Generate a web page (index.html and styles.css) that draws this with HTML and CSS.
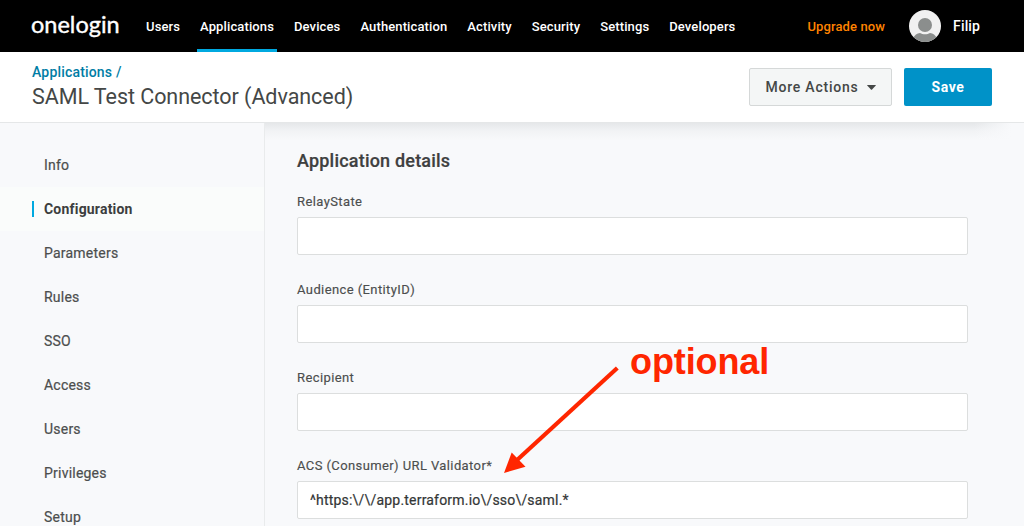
FILE: index.html
```html
<!DOCTYPE html>
<html lang="en">
<head>
<meta charset="utf-8">
<title>SAML Test Connector (Advanced)</title>
<link rel="stylesheet" href="styles.css">
</head>
<body>
<header class="topbar">
  <div class="logo">onelogin</div>
  <nav class="nav">
    <a>Users</a>
    <a class="current">Applications</a>
    <a>Devices</a>
    <a>Authentication</a>
    <a>Activity</a>
    <a>Security</a>
    <a>Settings</a>
    <a>Developers</a>
  </nav>
  <div class="account">
    <a class="upgrade">Upgrade now</a>
    <svg class="avatar" width="32" height="32" viewBox="0 0 32 32">
      <defs><clipPath id="disc"><circle cx="16" cy="16" r="16"/></clipPath></defs>
      <g clip-path="url(#disc)">
        <rect width="32" height="32" fill="#f1f1f1"/>
        <circle cx="16" cy="15" r="7" fill="#8b8e8d"/>
        <path d="M4 28.5C5.500 25 8 23.200 11 23c1.500.9 3 1.300 5 1.300s3.500-.4 5-1.300c3 .2 5.500 2 7 5.500V32H4z" fill="#8b8e8d"/>
      </g>
    </svg>
    <span class="user">Filip</span>
  </div>
</header>
<section class="titlebar">
  <div class="heading">
    <a class="crumb">Applications /</a>
    <h1>SAML Test Connector (Advanced)</h1>
  </div>
  <div class="actions">
    <button class="btn more">More Actions
      <svg width="9" height="5" viewBox="0 0 8 5" preserveAspectRatio="none"><path d="M.5 0h7q.7 0 .3.600L4.500 4.600q-.5.500-1 0L.2.600Q-.2 0 .5 0z" fill="#444746"/></svg>
    </button>
    <button class="btn save">Save</button>
  </div>
</section>
<div class="layout">
  <aside class="side">
    <a>Info</a>
    <a class="active"><span>Configuration</span></a>
    <a>Parameters</a>
    <a>Rules</a>
    <a>SSO</a>
    <a>Access</a>
    <a>Users</a>
    <a>Privileges</a>
    <a>Setup</a>
  </aside>
  <main class="main">
    <h2>Application details</h2>
    <label class="field"><span>RelayState</span><input type="text"></label>
    <label class="field"><span>Audience (EntityID)</span><input type="text"></label>
    <label class="field"><span>Recipient</span><input type="text"></label>
    <label class="field"><span>ACS (Consumer) URL Validator*</span><input type="text" value="^https:\/\/app.terraform.io\/sso\/saml.*"></label>
  </main>
</div>
<div class="note">optional</div>
<svg class="arrow" width="120" height="112" viewBox="500 364 120 112">
  <path d="M617.300 368L516 461" stroke="#ff2600" stroke-width="4.200" fill="none"/>
  <path d="M504 473L511.700 452.500L525.500 466.700z" fill="#ff2600"/>
</svg>
</body>
</html>
```
FILE: styles.css
```css
* { box-sizing: border-box; }
body {
  margin: 0;
  height: 526px;
  overflow: hidden;
  position: relative;
  background: #f8f9fb;
  color: #444746;
  font-family: Roboto, "Liberation Sans", sans-serif;
}
.topbar {
  height: 52px;
  background: #000;
  color: #fff;
  display: flex;
  align-items: center;
  padding: 0 44px 0 31px;
  font-size: 13px;
  font-weight: 500;
  letter-spacing: 0.12px;
}
.logo {
  width: 115px;
  font: 400 23.5px/30px Lato, sans-serif;
  letter-spacing: 0;
  padding-bottom: 5px;
  -webkit-text-stroke: 0.4px #fff;
}
.nav { display: flex; gap: 14px; height: 52px; margin-left: -3px; }
.nav a { padding: 0 3px; line-height: 53px; }
.nav .current { box-shadow: inset 0 -3px #00a9e0; }
.account { display: flex; align-items: center; margin-left: auto; }
.upgrade { color: #ff8300; margin-right: 24px; }
.avatar { margin-right: 12px; }
.user { font-size: 14px; }
.titlebar {
  height: 71px;
  background: #fff;
  border-bottom: 1px solid #e5e7e8;
  display: flex;
  justify-content: space-between;
  padding: 11px 32px 0;
}
.crumb { display: block; color: #007da5; font-size: 14px; font-weight: 500; line-height: 18px; letter-spacing: 0.18px; }
h1 { margin: 3px 0 0; font-size: 21.5px; font-weight: 400; line-height: 26px; letter-spacing: -0.05px; }
.actions { display: flex; gap: 12px; padding-top: 5px; }
.btn {
  height: 38px;
  border-radius: 2px;
  font: 500 14px/20px Roboto, sans-serif;
  padding: 0;
}
.more {
  width: 143px;
  display: flex;
  align-items: center;
  justify-content: center;
  gap: 8px;
  color: #444746;
  background: #f4f6f6;
  border: 1px solid #d5d8d8;
  letter-spacing: 0.77px;
}
.save { width: 88px; color: #fff; background: #0092c8; border: 0; font-weight: 700; letter-spacing: 0.6px; }
.layout { display: flex; height: 403px; }
.side { width: 265px; flex: none; border-right: 1px solid #e9ebec; padding-top: 20px; }
.side a {
  display: flex;
  align-items: center;
  height: 44px;
  padding-left: 44px;
  color: #4c4e4e;
  font-size: 14px;
  font-weight: 400;
  letter-spacing: 0.22px;
  -webkit-text-stroke: 0.2px;
}
.side .active { padding-left: 32px; background: #fafcfb; color: #3c3e3e; font-weight: 700; letter-spacing: 0.2px; -webkit-text-stroke: 0; }
.active span { border-left: 2px solid #00a9e0; padding-left: 10px; line-height: 16px; }
.main {
  flex: 1;
  padding: 26px 56px 0 32px;
  background: linear-gradient(rgba(40,50,55,.09), rgba(40,50,55,.03) 8px, transparent 18px) 0 0 / 759px 18px no-repeat;
  position: relative;
}
.main::after {
  content: "";
  position: absolute;
  top: 0;
  right: 0;
  width: 50px;
  height: 18px;
  background: linear-gradient(90deg, transparent, #f8f9fb 75%);
}
h2 { margin: 0 0 18px; font-size: 18px; font-weight: 500; line-height: 24px; letter-spacing: 0.2px; color: #3e4040; -webkit-text-stroke: 0.2px; }
.field { display: block; height: 88px; }
.field span { display: block; height: 26px; font-size: 13px; line-height: 22px; letter-spacing: 0.4px; color: #4c4e4e; -webkit-text-stroke: 0.15px; }
.field input {
  display: block;
  width: 671px;
  height: 38px;
  padding: 0 12px;
  border: 1px solid #dcdede;
  border-radius: 2px;
  background: #fff;
  color: #333636;
  font: 400 14px Roboto, sans-serif;
  letter-spacing: 0.2px;
  -webkit-text-stroke: 0.2px;
}
.note {
  position: absolute;
  left: 630px;
  top: 341px;
  color: #ff2600;
  font: 700 36px/42px "Liberation Sans", Arial, sans-serif;
  letter-spacing: -0.1px;
}
.arrow { position: absolute; left: 500px; top: 364px; }
```
